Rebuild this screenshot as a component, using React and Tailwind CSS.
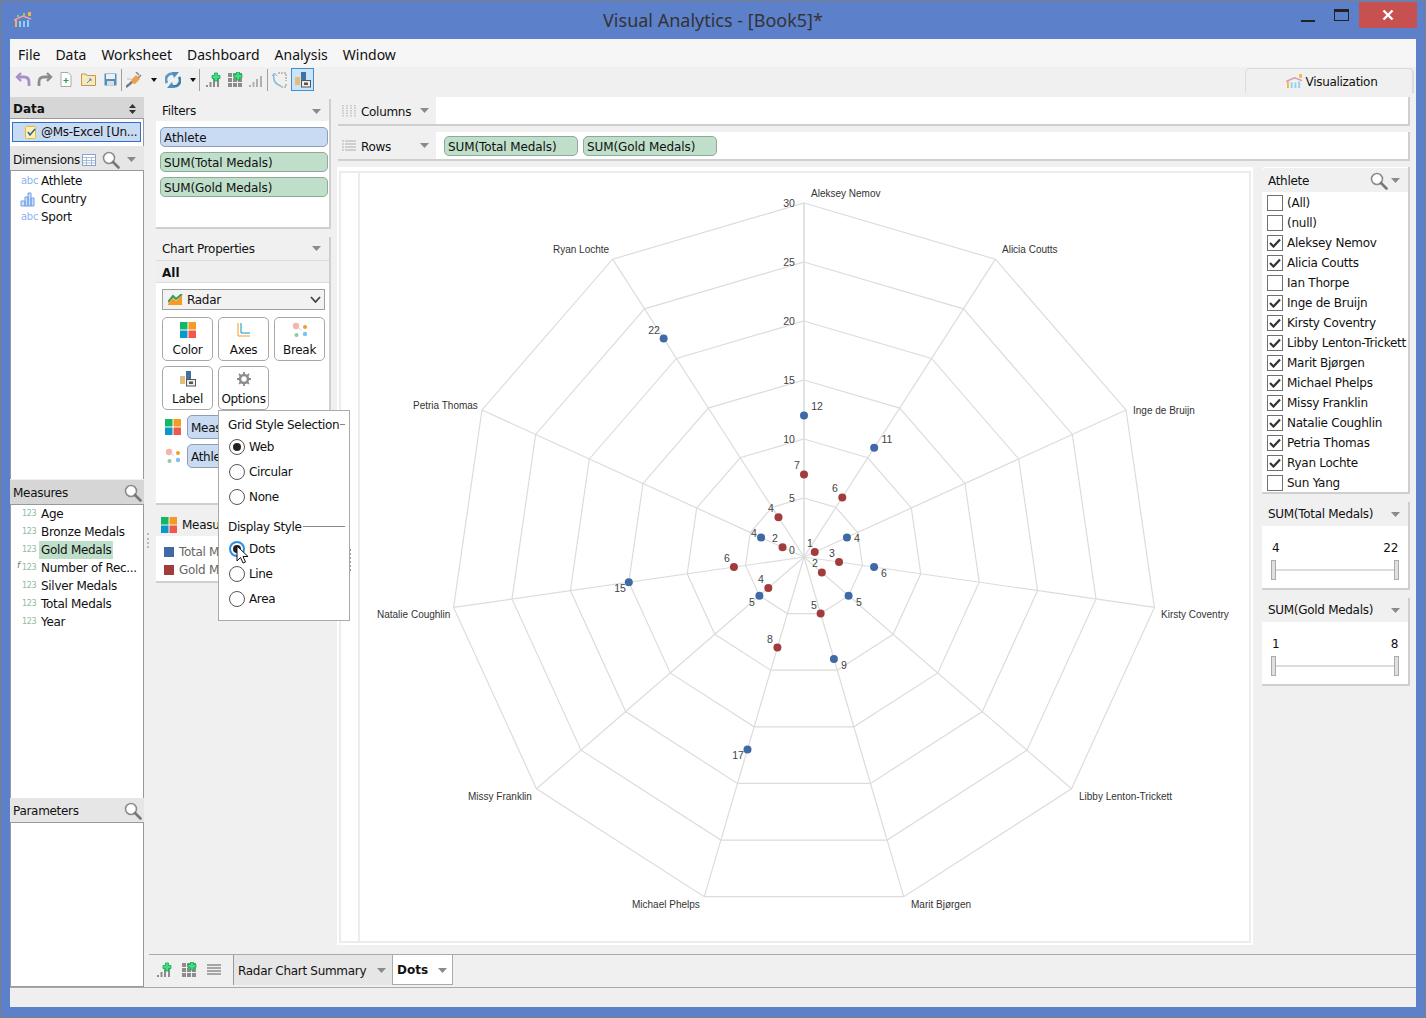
import React from 'react';

const Caret = ({ c = '#8a8a8a', w = 9, h = 5 }) => (
  <svg width={w} height={h} viewBox="0 0 10 6" preserveAspectRatio="none" className="shrink-0"><polygon points="0,0 10,0 5,6" fill={c} /></svg>
);
const Search = ({ s = 18 }) => (
  <svg width={s} height={s} viewBox="0 0 18 18" className="shrink-0" fill="none">
    <circle cx="7" cy="7" r="5.500" stroke="#8c8c8c" strokeWidth="1.600" fill="#fff" />
    <line x1="11" y1="11" x2="16.500" y2="16.500" stroke="#777" strokeWidth="2.600" strokeLinecap="round" />
  </svg>
);
const Four = ({ s = 16 }) => (
  <svg width={s} height={s} viewBox="0 0 16 16" className="shrink-0">
    <rect x="0" y="0" width="7.500" height="7.500" fill="#12b76a" /><rect x="8.500" y="0" width="7.500" height="7.500" fill="#f59a23" />
    <rect x="0" y="8.500" width="7.500" height="7.500" fill="#0a97c9" /><rect x="8.500" y="8.500" width="7.500" height="7.500" fill="#f0584c" />
  </svg>
);
const Dots4 = ({ s = 16 }) => (
  <svg width={s} height={s} viewBox="0 0 16 16" className="shrink-0">
    <circle cx="4" cy="4" r="3.200" fill="#f5b5ae" /><circle cx="13" cy="5" r="2" fill="#f59a23" />
    <circle cx="4.500" cy="13" r="2" fill="#8ecb9e" /><circle cx="13" cy="12" r="2.200" fill="#7cc4ee" />
    <path d="M7 6 L10 9" stroke="#bbb" strokeDasharray="1 1" />
  </svg>
);
const LabelIc = () => (
  <svg width="16" height="16" viewBox="0 0 16 16" className="shrink-0">
    <rect x="0" y="5" width="5" height="8" fill="#e2bd80" /><rect x="6" y="0" width="5" height="9" fill="#41719f" />
    <rect x="6.500" y="8.500" width="9" height="6.500" fill="#eee" stroke="#555" />
    <rect x="9" y="10.500" width="4" height="2.500" fill="#555" />
  </svg>
);
const Bars = ({ plus, c = '#8c8c8c' }) => (
  <svg width="16" height="16" viewBox="0 0 16 16" className="shrink-0">
    <rect x="1" y="13" width="2" height="2" fill={c} /><rect x="4.500" y="10" width="2" height="5" fill={c} />
    <rect x="8" y="7" width="2" height="8" fill={c} /><rect x="12" y="4" width="2" height="11" fill={c} />
    {plus && <path d="M9.500 1h3v2.500h2.500v3h-2.500v2.500h-3v-2.500h-2.500v-3h2.500z" fill="#3fe07f" stroke="#12a84c" strokeWidth="0.800" />}
  </svg>
);
const GridIc = ({ plus = true }) => (
  <svg width="16" height="16" viewBox="0 0 16 16" className="shrink-0">
    {[1, 6, 11].map(y => [1, 6, 11].map(x => <rect key={x + '-' + y} x={x} y={y} width="4" height="4" fill="#8c8c8c" />))}
    {plus && <path d="M9.500 0h3v2.500h2.500v3h-2.500v2.500h-3v-2.500h-2.500v-3h2.500z" fill="#3fe07f" stroke="#12a84c" strokeWidth="0.800" />}
  </svg>
);
const Abc = () => <span className="w-[31px] pl-[11px] text-[10px] leading-none text-[#8fb4ee] shrink-0">abc</span>;
const N123 = ({ f }) => (
  <span className="relative w-[31px] pl-[12px] text-[8px] leading-none text-[#8dbb9f] shrink-0">
    {f ? <i className="absolute left-[7px] -top-[3px] text-[9px] text-[#777]">f</i> : null}123
  </span>
);
const Sep = ({ ml = 'ml-[3px]' }) => <div className={`w-px h-[22px] bg-[#a0a0a0] ${ml}`} />;

const Pill = ({ children, blue, className = '' }) => (
  <div className={`h-[20px] flex items-center pl-[3px] rounded-[5px] border whitespace-nowrap tracking-[-0.1px] ${blue ? 'bg-[#c9daf3] border-[#8f9db6]' : 'bg-[#bfdfcb] border-[#8fa99a]'} ${className}`}>{children}</div>
);
const Panel = ({ children, className = '' }) => (
  <div className={`bg-white border-r-2 border-b-2 border-[#cfcfcf] rounded-tl-[4px] ${className}`}>{children}</div>
);
const PanelHead = ({ title, h = 'h-[22px]', pl = 'pl-[6px]', pr = 'pr-[8px]' }) => (
  <div className={`${h} ${pl} ${pr} bg-[#f0f0f0] flex items-center justify-between`}><span>{title}</span><Caret /></div>
);
const PropBtn = ({ icon, label }) => (
  <div className="w-[51px] h-[44px] bg-white border border-[#a8a8a8] rounded-[5px] flex flex-col items-center pt-[3px]">
    <div className="h-[17px] flex items-center">{icon}</div>
    <div className="mt-[4px] leading-[17px]">{label}</div>
  </div>
);
const Radio = ({ label, on, hover }) => (
  <div className="flex items-center h-[25px] pl-[10px]">
    <div className={`w-[16px] h-[16px] rounded-full border bg-white flex items-center justify-center ${hover ? 'border-[#2a8fe0] border-2' : 'border-[#555]'}`}>
      {on && <div className="w-[8px] h-[8px] rounded-full bg-[#222]" />}
    </div>
    <span className="ml-[4px]">{label}</span>
  </div>
);
const Check = ({ label, on }) => (
  <div className="flex items-center h-[20px] pl-[5px] tracking-[-0.25px]">
    <div className="w-[16px] h-[16px] border border-[#707070] bg-white flex items-center justify-center shrink-0">
      {on && <svg width="12" height="10" viewBox="0 0 12 10"><path d="M1 5 L4.500 8.500 L11 1.500" fill="none" stroke="#333" strokeWidth="2.200" /></svg>}
    </div>
    <span className="ml-[4px] whitespace-nowrap">{label}</span>
  </div>
);
const Slider = ({ title, lo, hi }) => (
  <Panel>
    <PanelHead title={title} h="h-[24px]" />
    <div className="h-[62px] px-[9px] pt-[13px]">
      <div className="flex justify-between px-px leading-[18px]"><span>{lo}</span><span>{hi}</span></div>
      <div className="relative h-[20px] mt-[3px] flex items-center justify-between">
        <div className="absolute left-[4px] right-[4px] top-[9px] h-[2px] bg-[#dcdcdc]" />
        <div className="relative w-[5px] h-[20px] bg-[#e0e0e0] border border-[#aaa]" />
        <div className="relative w-[5px] h-[20px] bg-[#e0e0e0] border border-[#aaa]" />
      </div>
    </div>
  </Panel>
);

const CX = 804, CY = 557, U = 11.8, N = 11;
const pt = (i, v) => {
  const a = (i * 2 * Math.PI) / N;
  return [CX + Math.sin(a) * v * U, CY - Math.cos(a) * v * U];
};
const total = [12, 11, 4, 6, 5, 9, 17, 5, 15, 4, 22];
const gold = [7, 6, 1, 3, 2, 5, 8, 4, 6, 2, 4];
const axisLabels = [
  ['Aleksey Nemov', 811, 197], ['Alicia Coutts', 1002, 253], ['Inge de Bruijn', 1133, 414], ['Kirsty Coventry', 1161, 618],
  ['Libby Lenton-Trickett', 1079, 800], ['Marit Bjørgen', 911, 908], ['Michael Phelps', 632, 908], ['Missy Franklin', 468, 800],
  ['Natalie Coughlin', 377, 618], ['Petria Thomas', 413, 409], ['Ryan Lochte', 553, 253],
];
const numLabels = [
  ['30', 789, 207], ['25', 789, 266], ['20', 789, 325], ['15', 789, 384], ['10', 789, 443], ['5', 792, 502], ['0', 792, 554],
  ['12', 817, 410], ['11', 887, 443], ['4', 857, 542], ['6', 884, 577], ['5', 859, 606], ['9', 844, 669], ['17', 738, 759], ['5', 752, 606], ['15', 620, 592], ['4', 754, 537], ['22', 654, 334],
  ['7', 797, 469], ['6', 835, 492], ['1', 810, 547], ['3', 832, 557], ['2', 815, 567], ['5', 814, 609], ['8', 770, 643], ['4', 761, 583], ['6', 727, 562], ['2', 775, 542], ['4', 771, 512],
];
const Radar = () => (
  <svg viewBox="337 167 916 778" fontFamily="'Liberation Sans', sans-serif" className="block w-[916px] h-[778px] tracking-normal">
    <rect x="340" y="172" width="910" height="770" fill="none" stroke="#ececec" strokeWidth="2" />
    <line x1="359" y1="173" x2="359" y2="942" stroke="#ececec" strokeWidth="2" />
    {[5, 10, 15, 20, 25, 30].map(v => (
      <polygon key={v} points={Array.from({ length: N }, (_, i) => pt(i, v).join(',')).join(' ')} fill="none" stroke="#dcdcdc" strokeWidth="1.200" />
    ))}
    {Array.from({ length: N }, (_, i) => {
      const [x, y] = pt(i, 30);
      return <line key={i} x1={CX} y1={CY} x2={x} y2={y} stroke="#dcdcdc" strokeWidth={i === 0 ? 1.6 : 1.2} />;
    })}
    {total.map((v, i) => { const [x, y] = pt(i, v); return <circle key={i} cx={x} cy={y} r="4" fill="#3f6aa5" />; })}
    {gold.map((v, i) => { const [x, y] = pt(i, v); return <circle key={i} cx={x} cy={y} r="4" fill="#a23c3c" />; })}
    {axisLabels.map(([t, x, y]) => <text key={t} x={x} y={y} fontSize="10" fill="#333">{t}</text>)}
    {numLabels.map(([t, x, y], i) => <text key={i} x={x} y={y} fontSize="10.500" fill="#444" textAnchor="middle">{t}</text>)}
  </svg>
);

const athletes = [
  ['(All)', 0], ['(null)', 0], ['Aleksey Nemov', 1], ['Alicia Coutts', 1], ['Ian Thorpe', 0], ['Inge de Bruijn', 1], ['Kirsty Coventry', 1],
  ['Libby Lenton-Trickett', 1], ['Marit Bjørgen', 1], ['Michael Phelps', 1], ['Missy Franklin', 1], ['Natalie Coughlin', 1], ['Petria Thomas', 1], ['Ryan Lochte', 1], ['Sun Yang', 0],
];

export default function App() {
  return (
    <div className="relative w-[1426px] h-[1018px] bg-[#5d80cb] overflow-hidden border border-[#7a7f8a] text-[#111] flex flex-col font-[DejaVu_Sans,sans-serif] text-[12px] tracking-[-0.3px]">
      {/* title bar */}
      <div className="relative h-[38px] shrink-0 flex items-center justify-center">
        <svg width="18" height="16" viewBox="0 0 18 16" className="absolute left-[13px] top-[11px]">
          <rect x="1" y="8" width="2" height="7" fill="#f7b24a" /><rect x="5" y="9" width="2" height="6" fill="#8fd0f5" /><rect x="9" y="9" width="2" height="6" fill="#8fd0f5" /><rect x="13" y="8" width="2" height="7" fill="#8fd0f5" />
          <rect x="3" y="3" width="2" height="2" fill="#8ecb6e" /><rect x="9" y="1" width="2" height="3" fill="#8ecb6e" /><rect x="14" y="0" width="3" height="4" fill="#f7b24a" />
          <path d="M0 8 L9 4 L17 7" stroke="#f0a0a0" strokeWidth="1.500" fill="none" />
        </svg>
        <div className="text-[18px] tracking-normal text-[#333] font-[Noto_Sans,sans-serif] leading-none">Visual Analytics - [Book5]*</div>
        <div className="absolute left-[1300px] top-[19px] w-[14px] h-[2px] bg-[#222]" />
        <div className="absolute left-[1333px] top-[8px] w-[15px] h-[12px] border border-[#222] border-t-[3px]" />
        <div className="absolute left-[1358px] top-[1px] w-[58px] h-[26px] bg-[#c75050] flex items-center justify-center">
          <svg width="12" height="12" viewBox="0 0 12 12"><path d="M1.500 1.500 L10.500 10.500 M10.500 1.500 L1.500 10.500" stroke="#fff" strokeWidth="2.400" /></svg>
        </div>
      </div>

      {/* client */}
      <div className="relative ml-[9px] w-[1406px] h-[968px] bg-[#f0f0f0] flex flex-col shrink-0">
        <div className="h-[28px] bg-[#f6f6f6] flex items-center pl-[8px] gap-[15px] text-[14px] tracking-normal font-[Noto_Sans,sans-serif] shrink-0 pt-[2px]">
          {['File', 'Data', 'Worksheet', 'Dashboard', 'Analysis', 'Window'].map(m => <span key={m}>{m}</span>)}
        </div>
        {/* toolbar */}
        <div className="relative h-[30px] flex items-center pl-[5px] pb-[5px] shrink-0">
          <svg width="16" height="15" viewBox="0 0 16 15"><path d="M6 1 L2 5 L6 9" fill="none" stroke="#a78fc8" strokeWidth="2.400" /><path d="M2 5 H9 Q14 5 14 10 V14" fill="none" stroke="#a78fc8" strokeWidth="2.800" /></svg>
          <svg width="16" height="15" viewBox="0 0 16 15" className="ml-[6px]"><path d="M10 1 L14 5 L10 9" fill="none" stroke="#8c8c8c" strokeWidth="2.400" /><path d="M14 5 H7 Q2 5 2 10 V14" fill="none" stroke="#8c8c8c" strokeWidth="2.800" /></svg>
          <svg width="12" height="15" viewBox="0 0 12 15" className="ml-[7px]"><path d="M1 .5 H8 L11 3.500 V14.500 H1 Z" fill="#fff" stroke="#aaa" /><path d="M6 6 V11 M3.500 8.500 H8.500" stroke="#2a9a50" strokeWidth="1.200" /></svg>
          <svg width="15" height="13" viewBox="0 0 15 13" className="ml-[9px]"><path d="M.5 1 H5 L6 2.500 H14.500 V12.500 H.5 Z" fill="#f8e8bc" stroke="#c09a50" /><path d="M6 10 L10 6 M8 6 H10 V8" stroke="#3a8fd0" fill="none" /></svg>
          <svg width="13" height="13" viewBox="0 0 13 13" className="ml-[8px]"><rect x=".5" y=".5" width="12" height="12" fill="#4f8fc0" /><rect x="2" y="1" width="9" height="5" fill="#eee" /><rect x="3" y="8" width="7" height="4.500" fill="#ddd" /></svg>
          <Sep ml="ml-[4px]" />
          <svg width="16" height="16" viewBox="0 0 16 16" className="ml-[4px]"><path d="M5 8 L10 3 L14 7 L9 12 Q6 12 5 8 Z" fill="#f0a04a" /><path d="M0 15 L6 10" stroke="#777" strokeWidth="2.400" /><path d="M10 0 L13 3 M15 3 L12 6" stroke="#888" strokeWidth="1.500" /><path d="M1 7 H5 M2 12 L5 9" stroke="#bbb" /></svg>
          <div className="ml-[9px]"><Caret c="#111" w={6} h={4} /></div>
          <svg width="16" height="16" viewBox="0 0 16 16" className="ml-[8px]" fill="none"><path d="M2 11 A6 6 0 0 1 9 2" stroke="#5b9bc8" strokeWidth="2.800" /><path d="M14 5 A6 6 0 0 1 7 14" stroke="#3d7fae" strokeWidth="2.800" /><path d="M7 0 H14 L9 6 Z M9 16 H2 L7 10 Z" fill="#4f8fc0" /></svg>
          <div className="ml-[9px]"><Caret c="#111" w={6} h={4} /></div>
          <Sep ml="ml-[3px]" />
          <div className="ml-[5px]"><Bars plus /></div>
          <div className="ml-[6px]"><GridIc /></div>
          <div className="ml-[5px]"><Bars c="#b0b0b0" /></div>
          <Sep ml="ml-[3px]" />
          <svg width="16" height="16" viewBox="0 0 16 16" className="ml-[4px]" fill="none"><path d="M6 1 H14 V9 M14 12 V15 H9" stroke="#8c8c8c" strokeDasharray="2 1" /><path d="M2 2 Q0 11 9 14" stroke="#7cb4de" strokeWidth="1.400" /><path d="M0 4 L2.500 1 L5 4" stroke="#7cb4de" /></svg>
          <div className="ml-[3px] w-[23px] h-[23px] bg-[#cce4f7] border border-[#3a8fd8] flex items-center justify-center"><LabelIc /></div>
          <div className="absolute right-[2px] top-[1px] w-[169px] h-[25px] rounded-t-[5px] border-t border-l border-r border-[#dcdcdc] border-r-2 flex items-center justify-center gap-[3px] pt-[1px] pl-[5px]">
            <svg width="17" height="15" viewBox="0 0 18 16">
              <rect x="1" y="8" width="2" height="7" fill="#f7b24a" /><rect x="5" y="9" width="2" height="6" fill="#8fd0f5" /><rect x="9" y="9" width="2" height="6" fill="#8fd0f5" /><rect x="13" y="8" width="2" height="7" fill="#8fd0f5" />
              <rect x="14" y="0" width="3" height="4" fill="#f7b24a" /><path d="M0 8 L9 4 L17 7" stroke="#d89ab0" strokeWidth="1.500" fill="none" />
            </svg>
            <span>Visualization</span>
          </div>
        </div>

        {/* body */}
        <div className="h-[890px] flex shrink-0">
          {/* left column */}
          <div className="w-[134px] h-full flex flex-col shrink-0">
            <div className="h-[22px] bg-[#d6d6d6] flex items-center justify-between pl-[3px] pr-[8px] pt-[2px] font-bold tracking-normal text-[12px] border-b border-[#999]">
              <span>Data</span>
              <svg width="7" height="10" viewBox="0 0 7 10"><path d="M3.500 0 L7 4 H0 Z M3.500 10 L0 6 H7 Z" fill="#333" /></svg>
            </div>
            <div className="h-[27px] bg-white pt-[3px] px-[2px] border-r border-[#999]">
              <div className="h-[20px] bg-[#c9daf3] border border-[#2f6fc9] flex items-center pl-[12px] whitespace-nowrap">
                <svg width="12" height="14" viewBox="0 0 12 14" className="shrink-0"><rect x=".5" y="1.500" width="10" height="12" rx="1" fill="#fff2b0" stroke="#e2b93b" /><path d="M3 7 L5 10 L10 4" fill="none" stroke="#2f5fa9" strokeWidth="1.500" /></svg>
                <span className="ml-[4px]">@Ms-Excel [Un...</span>
              </div>
            </div>
            <div className="h-[25px] bg-[#e6e6e6] flex items-center pl-[3px] pt-[3px] border-b border-[#999]">
              <span>Dimensions</span>
              <svg width="14" height="12" viewBox="0 0 14 12" className="ml-[2px]"><rect x=".5" y=".5" width="13" height="11" fill="#fff" stroke="#8aa3c8" /><path d="M0 3.500 H14 M0 6.500 H14 M0 9 H14 M4.500 3 V12 M9.500 3 V12" stroke="#8aa3c8" strokeWidth=".7" /></svg>
              <div className="ml-[6px]"><Search /></div>
              <div className="ml-[7px]"><Caret /></div>
            </div>
            <div className="h-[308px] bg-white border-r border-l border-[#999] pt-[1px]">
              {[['Athlete', <Abc />], ['Country', <svg width="17" height="16" viewBox="0 0 17 16" className="ml-[10px] mr-[4px] shrink-0"><path d="M1 10 H5 V15 H1 Z M5 6 H8 V15 H5 Z M8 2 H11 V15 H8 Z M11 7 H14 V15 H11 Z" fill="#cfe0fb" stroke="#6f9fe8" /></svg>], ['Sport', <Abc />]].map(([t, ic]) => (
                <div key={t} className="h-[18px] flex items-center -ml-px">{ic}<span>{t}</span></div>
              ))}
            </div>
            <div className="h-[25px] mt-px bg-[#d6d6d6] flex items-center justify-between pl-[3px] pr-[2px] pt-[2px] border-b border-[#999]"><span>Measures</span><Search /></div>
            <div className="h-[293px] bg-white border-r border-l border-[#999]">
              {[['Age'], ['Bronze Medals'], ['Gold Medals', 0, 1], ['Number of Rec...', 1], ['Silver Medals'], ['Total Medals'], ['Year']].map(([t, f, sel]) => (
                <div key={t} className="h-[18px] flex items-center -ml-px"><N123 f={f} /><span className={sel ? 'bg-[#bfdfcb] px-[2px] -ml-[2px]' : ''}>{t}</span></div>
              ))}
            </div>
            <div className="h-[25px] bg-[#e6e6e6] flex items-center justify-between pl-[3px] pr-[2px] pt-[2px] border-b border-[#999]"><span>Parameters</span><Search /></div>
            <div className="flex-1 bg-white border-r border-l border-b border-[#999]" />
          </div>

          {/* right of left column */}
          <div className="relative flex-1 flex flex-col min-w-0">
            <div className="h-[858px] flex shrink-0">
              {/* filters + props */}
              <div className="ml-[12px] w-[175px] shrink-0 flex flex-col pt-[2px]">
                <Panel className="h-[130px]">
                  <PanelHead title="Filters" h="h-[22px] pt-[2px]" />
                  <div className="pl-[4px] pr-[1px] pt-[6px] flex flex-col gap-[5px]">
                    <Pill blue className="pt-[1px]">Athlete</Pill>
                    <Pill className="pt-[1px]">SUM(Total Medals)</Pill>
                    <Pill className="pt-[1px]">SUM(Gold Medals)</Pill>
                  </div>
                </Panel>
                <Panel className="mt-[8px] h-[268px]">
                  <PanelHead title="Chart Properties" h="h-[23px]" />
                  <div className="h-[23px] bg-[#efefef] border-y border-[#dcdcdc] flex items-center pl-[6px] pt-[2px] font-bold text-[12px] tracking-normal">All</div>
                  <div className="ml-[6px] mt-[6px] w-[163px] h-[21px] bg-[#f2f2f2] border border-[#a0a0a0] flex items-center pl-[5px] pr-[3px]">
                    <svg width="15" height="11" viewBox="0 0 15 11"><path d="M0 10 L5 4 L8 7 L14 1 V11 H0 Z" fill="#f59a23" /><path d="M0 8 L5 2 L8 5 L14 0" stroke="#3a9a50" strokeWidth="2" fill="none" /></svg>
                    <span className="ml-[4px] flex-1">Radar</span>
                    <svg width="11" height="7" viewBox="0 0 11 7"><path d="M1 1 L5.500 6 L10 1" stroke="#444" strokeWidth="1.800" fill="none" /></svg>
                  </div>
                  <div className="ml-[6px] mt-[7px] grid grid-cols-[51px_51px_51px] gap-x-[5px] gap-y-[5px]">
                    <PropBtn icon={<Four />} label="Color" />
                    <PropBtn icon={<svg width="14" height="14" viewBox="0 0 14 14" fill="none"><path d="M1 0 V13 H13" stroke="#f59a23" /><path d="M4 0 V10 H13" stroke="#0a97c9" /></svg>} label="Axes" />
                    <PropBtn icon={<Dots4 />} label="Break" />
                    <PropBtn icon={<LabelIc />} label="Label" />
                    <PropBtn icon={<svg width="14" height="14" viewBox="0 0 14 14"><circle cx="7" cy="7" r="4" fill="none" stroke="#8c8c8c" strokeWidth="2.600" /><path d="M7 0 V14 M0 7 H14 M2 2 L12 12 M12 2 L2 12" stroke="#8c8c8c" strokeWidth="1.800" strokeDasharray="2.500 9" /></svg>} label="Options" />
                  </div>
                  <div className="mt-[5px] ml-[9px] flex items-center h-[24px]"><Four /><div className="ml-[6px] w-[137px] h-[24px] bg-[#c9daf3] border border-[#8f9db6] rounded-[5px] flex items-center pl-[3px] pt-[1px]">Meas</div></div>
                  <div className="mt-[5px] ml-[9px] flex items-center h-[24px]"><Dots4 /><div className="ml-[6px] w-[137px] h-[24px] bg-[#c9daf3] border border-[#8f9db6] rounded-[5px] flex items-center pl-[3px] pt-[1px]">Athle</div></div>
                </Panel>
                <Panel className="mt-[7px] h-[71px]">
                  <div className="h-[24px] bg-[#f0f0f0] flex items-center pl-[5px] pt-[2px]"><Four /><span className="ml-[5px] whitespace-nowrap">Measu</span></div>
                  <div className="pt-[7px] pl-[8px] text-[#666]">
                    <div className="h-[18px] flex items-center"><div className="w-[10px] h-[10px] bg-[#3f6aa5] mr-[5px]" /><span className="whitespace-nowrap">Total M</span></div>
                    <div className="h-[18px] flex items-center"><div className="w-[10px] h-[10px] bg-[#a23c3c] mr-[5px]" /><span className="whitespace-nowrap">Gold M</span></div>
                  </div>
                </Panel>
              </div>

              {/* shelves + chart + right panels */}
              <div className="ml-[7px] w-[1072px] shrink-0 flex flex-col">
                <div className="h-[29px] flex bg-white border-r-2 border-b-2 border-[#cfcfcf] rounded-tl-[4px] shrink-0">
                  <div className="w-[98px] bg-[#f0f0f0] flex items-center pl-[4px] pr-[7px]">
                    <svg width="14" height="14" viewBox="0 0 14 14"><path d="M1 1 V13 M5 1 V13 M9 1 V13 M13 1 V13" stroke="#c4c4c4" strokeWidth="1.600" strokeDasharray="1.500 1" /></svg>
                    <span className="ml-[5px] pt-[2px] flex-1">Columns</span><Caret />
                  </div>
                </div>
                <div className="mt-[6px] h-[29px] flex bg-white border-r-2 border-b-2 border-[#cfcfcf] rounded-tl-[4px] shrink-0">
                  <div className="w-[98px] bg-[#f0f0f0] flex items-center pl-[4px] pr-[7px]">
                    <svg width="14" height="14" viewBox="0 0 14 14"><path d="M0 2 H14 M0 5 H14 M0 8 H14 M0 11 H14" stroke="#c4c4c4" strokeWidth="1.600" strokeDasharray="2 1 11 0" /></svg>
                    <span className="ml-[5px] pt-[2px] flex-1">Rows</span><Caret />
                  </div>
                  <div className="flex items-center gap-[5px] ml-[8px] pt-[1px]">
                    <Pill className="w-[134px] pt-[1px]">SUM(Total Medals)</Pill>
                    <Pill className="w-[134px] pt-[1px]">SUM(Gold Medals)</Pill>
                  </div>
                </div>
                <div className="mt-[6px] flex shrink-0">
                  <div className="-ml-px w-[916px] h-[778px] bg-white shrink-0"><Radar /></div>
                  <div className="ml-[9px] w-[148px] shrink-0 flex flex-col gap-[8px]">
                    <Panel>
                      <div className="h-[24px] mt-[1px] bg-[#f0f0f0] flex items-center pl-[6px] pr-[8px] pt-[1px] rounded-tl-[4px]">
                        <span className="flex-1">Athlete</span><Search /><div className="ml-[3px]"><Caret /></div>
                      </div>
                      <div className="pt-[1px] h-[300px] overflow-hidden">
                        {athletes.map(([t, on]) => <Check key={t} label={t} on={!!on} />)}
                      </div>
                    </Panel>
                    <Slider title="SUM(Total Medals)" lo="4" hi="22" />
                    <Slider title="SUM(Gold Medals)" lo="1" hi="8" />
                  </div>
                </div>
              </div>
            </div>

            {/* tabs */}
            <div className="ml-[5px] h-[31px] border-t border-[#aaa] flex items-stretch shrink-0 -mt-[1px]">
              <div className="w-[84px] flex items-center gap-[9px] pl-[7px]">
                <Bars plus /><GridIc />
                <svg width="16" height="14" viewBox="0 0 16 14"><path d="M1 2 H15 M1 5 H15 M1 8 H15 M1 11 H15" stroke="#8c8c8c" strokeWidth="1.600" /></svg>
              </div>
              <div className="w-[159px] h-[30px] bg-[#e6e6e6] border-l border-[#999] flex items-center pl-[4px] pr-[6px] pt-[1px] justify-between"><span>Radar Chart Summary</span><Caret /></div>
              <div className="w-[61px] h-[30px] bg-white border-x border-b border-[#aaa] flex items-center pl-[4px] pr-[5px] pt-[1px] justify-between font-bold text-[12px] tracking-normal"><span>Dots</span><Caret /></div>
            </div>

            {/* grip marks */}
            <div className="absolute left-[3px] top-[436px] w-[2px] h-[15px] border-l-2 border-dotted border-[#bbb]" />
            <div className="absolute left-[205px] top-[452px] w-[2px] h-[22px] border-l-2 border-dotted border-[#999]" />

            {/* popover */}
            <div className="absolute left-[74px] top-[313px] w-[132px] h-[211px] bg-white border border-[#aaa] pt-[4px] z-10 tracking-[-0.35px]">
              <div className="flex items-center pl-[9px] h-[19px]"><span className="whitespace-nowrap">Grid Style Selection</span><div className="flex-1 h-px bg-[#888] ml-[1px] mr-[4px]" /></div>
              <Radio label="Web" on />
              <Radio label="Circular" />
              <Radio label="None" />
              <div className="flex items-center pl-[9px] h-[19px] mt-[8px]"><span className="whitespace-nowrap">Display Style</span><div className="flex-1 h-px bg-[#888] ml-[1px] mr-[4px]" /></div>
              <Radio label="Dots" on hover />
              <Radio label="Line" />
              <Radio label="Area" />
              <svg width="13" height="20" viewBox="0 0 13 20" className="absolute left-[17px] top-[134px]"><path d="M1 1 V16 L4.500 12.500 L7 18 L9.500 17 L7 11.500 H12 Z" fill="#fff" stroke="#111" /></svg>
            </div>
          </div>
        </div>
        {/* status */}
        <div className="flex-1 border-t border-[#aaa] bg-[#efefef]" />
      </div>
    </div>
  );
}
